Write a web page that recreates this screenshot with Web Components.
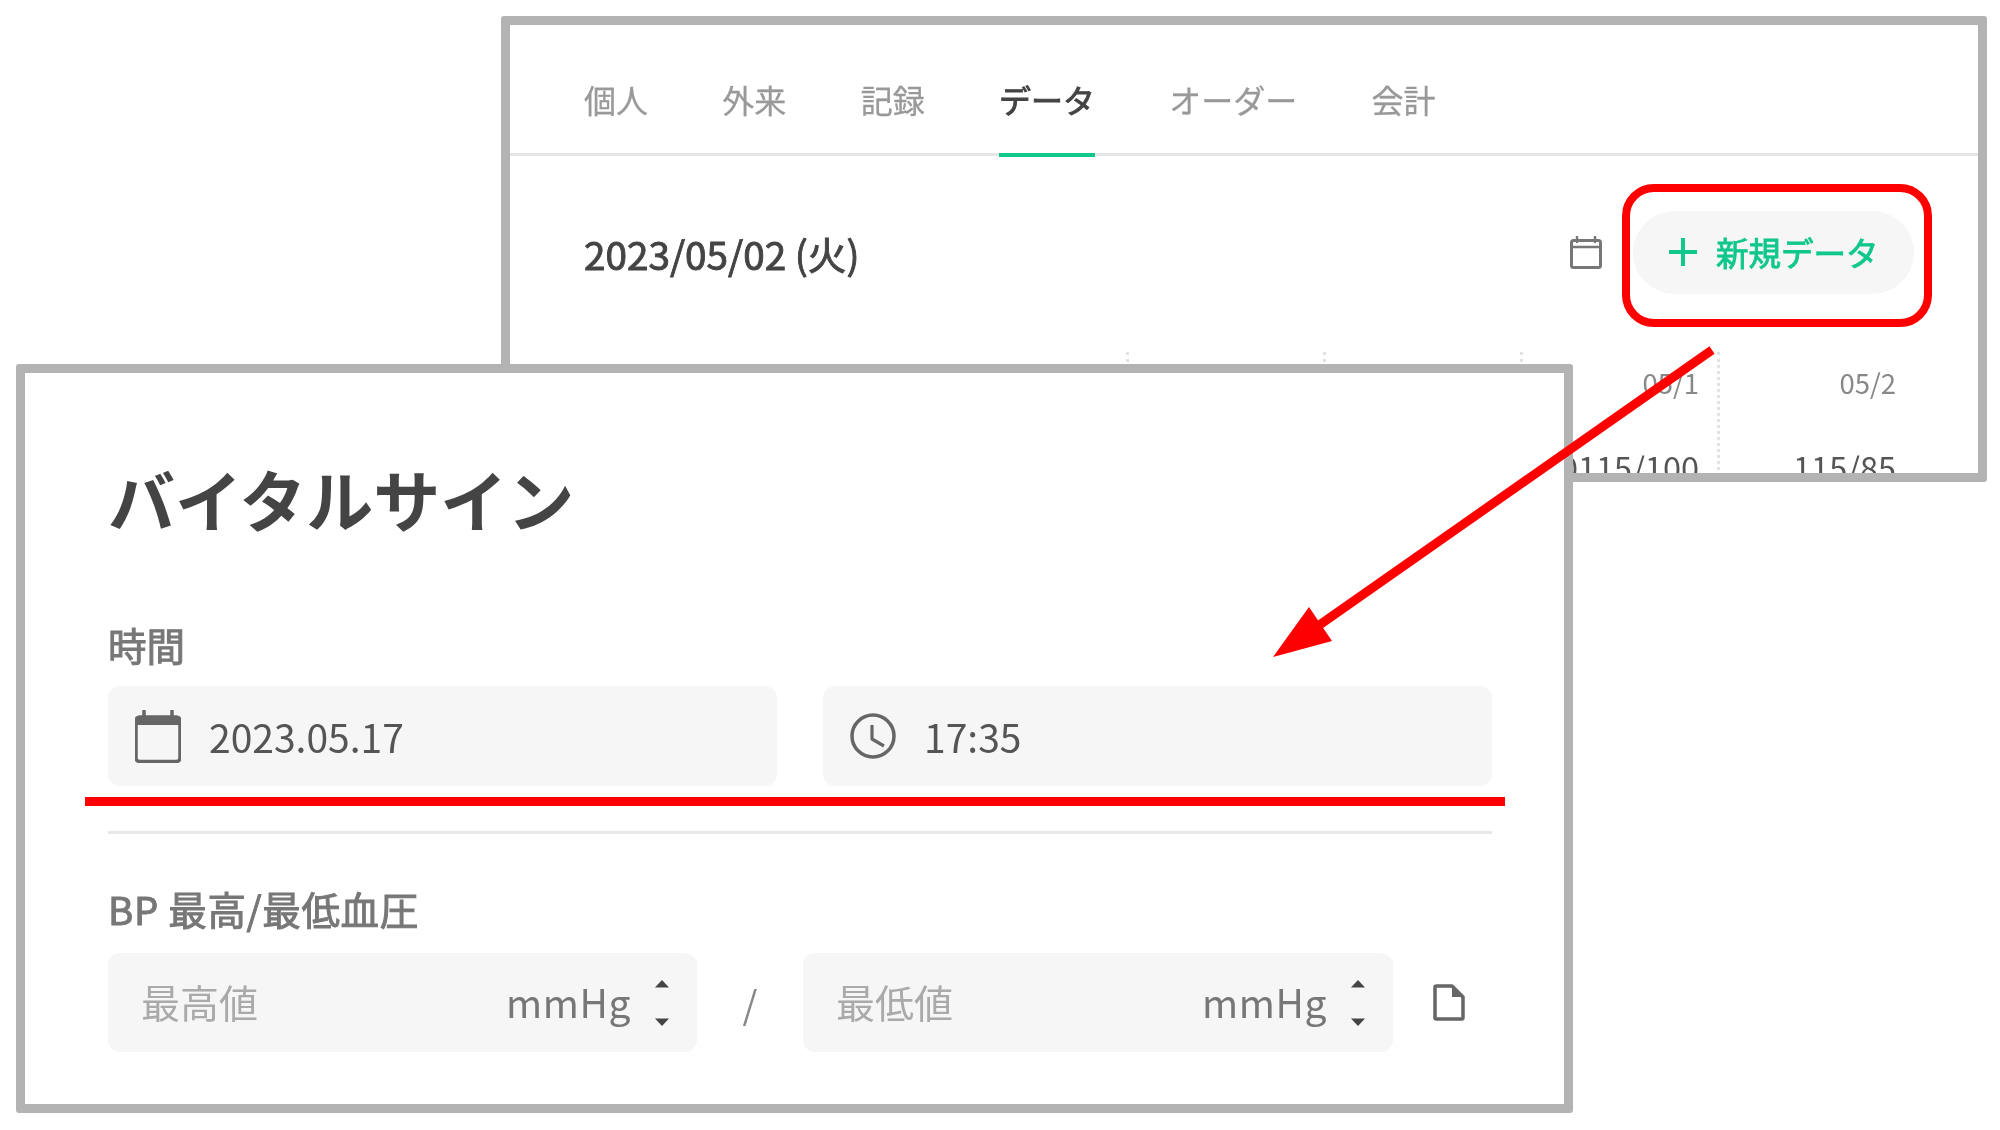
<!DOCTYPE html>
<html lang="ja">
<head>
<meta charset="utf-8">
<title>バイタルサイン</title>
<style>
    html, body { margin: 0; background: #fff; }
    body {
        font-family: "Noto Sans CJK JP", "Noto Sans", sans-serif;
        color: #444;
    }
    #canvas { position: relative; width: 2000px; height: 1130px; overflow: hidden; background: #fff; }
    #back { left: 501px; top: 16px; width: 1486px; height: 466px; }
    #front { left: 16px; top: 364px; width: 1557px; height: 749px; }
</style>
</head>
<body>
<div id="canvas">
    <app-window id="back">
        <tab-bar>
            <tab-item>個人</tab-item>
            <tab-item>外来</tab-item>
            <tab-item>記録</tab-item>
            <tab-item active>データ</tab-item>
            <tab-item>オーダー</tab-item>
            <tab-item>会計</tab-item>
        </tab-bar>
        <date-header date="2023/05/02 (火)">
            <new-button>新規データ</new-button>
        </date-header>
        <data-table></data-table>
    </app-window>

    <app-window id="front">
        <vital-form></vital-form>
    </app-window>

    <red-marks></red-marks>
</div>

<script>
const ICONS = {
    calendar: `<svg width="46" height="53" viewBox="0 0 46 53" fill="none">
        <rect x="1" y="7" width="44" height="44.5" rx="3.5" stroke="#666" stroke-width="3.5"/>
        <path d="M1 10.5a3.5 3.5 0 0 1 3.5-3.5h37a3.5 3.5 0 0 1 3.5 3.5V15H1z" fill="#666"/>
        <path d="M9 1v7M37 1v7" stroke="#666" stroke-width="3.5" stroke-linecap="round"/>
    </svg>`,
    calendarSmall: `<svg width="32" height="33" viewBox="0 0 32 33" fill="none">
        <rect x="1.5" y="4.5" width="29" height="27" rx="2" stroke="#777" stroke-width="3"/>
        <path d="M1.5 11h29" stroke="#777" stroke-width="2.5"/>
        <path d="M7 1v5M25 1v5" stroke="#777" stroke-width="2.5" stroke-linecap="round"/>
    </svg>`,
    clock: `<svg width="46" height="46" viewBox="0 0 46 46" fill="none">
        <circle cx="23" cy="23" r="21" stroke="#666" stroke-width="3.5"/>
        <path d="M22 12v14l12 7" stroke="#666" stroke-width="3.2" stroke-linejoin="round"/>
    </svg>`,
    doc: `<svg width="32" height="37" viewBox="0 0 32 37" fill="none">
        <path d="M2 3.5A1.5 1.5 0 0 1 3.500 2H19l11 11v20.500a1.500 1.500 0 0 1-1.500 1.500h-25A1.500 1.500 0 0 1 2 33.500z" stroke="#666" stroke-width="3.500" stroke-linejoin="round"/>
        <path d="M19 2l11 11H19z" fill="#666"/>
    </svg>`,
    plus: `<svg width="28" height="28" viewBox="0 0 28 28" fill="none">
        <path d="M0 14h28M14 0v28" stroke="#10c78c" stroke-width="4"/>
    </svg>`
};

class AppWindow extends HTMLElement {
    constructor() {
        super();
        this.attachShadow({mode: 'open'});
        this.shadowRoot.innerHTML = `
            <style>
                :host {
                    position: absolute;
                    display: block;
                    box-sizing: border-box;
                    border: 9px solid #b3b3b3;
                    border-radius: 3px;
                    background: #fff;
                    overflow: hidden;
                    filter: blur(.7px);
                }
            </style>
            <slot></slot>
        `;
    }
}

class TabBar extends HTMLElement {
    constructor() {
        super();
        this.attachShadow({mode: 'open'});
        this.shadowRoot.innerHTML = `
            <style>
                :host {
                    display: flex;
                    box-sizing: border-box;
                    height: 131px;
                    padding-left: 74px;
                    gap: 74.3px;
                    border-bottom: 3px solid #e6e6e6;
                }
            </style>
            <slot></slot>
        `;
    }
}

class TabItem extends HTMLElement {
    constructor() {
        super();
        this.attachShadow({mode: 'open'});
        this.shadowRoot.innerHTML = `
            <style>
                :host {
                    display: flex;
                    box-sizing: border-box;
                    height: 132px;
                    padding-top: 51px;
                    line-height: 46px;
                    font-size: 32px;
                    color: #999;
                    -webkit-text-stroke: .3px #999;
                }
                :host([active]) {
                    color: #444;
                    -webkit-text-stroke: .9px #444;
                    border-bottom: 4px solid #10c78c;
                }
            </style>
            <slot></slot>
        `;
    }
}

class DateHeader extends HTMLElement {
    constructor() {
        super();
        this.attachShadow({mode: 'open'});
        this.shadowRoot.innerHTML = `
            <style>
                :host {
                    display: flex;
                    align-items: center;
                    height: 83px;
                    margin-top: 55px;
                    padding: 0 64px 0 74px;
                }
                .date { flex: 1; font-size: 38.7px; color: #444; -webkit-text-stroke: .9px #444; }
                .cal { display: flex; margin-right: 31px; }
            </style>
            <span class="date">${this.getAttribute('date')}</span>
            <span class="cal">${ICONS.calendarSmall}</span>
            <slot></slot>
        `;
    }
}

class NewButton extends HTMLElement {
    constructor() {
        super();
        this.attachShadow({mode: 'open'});
        this.shadowRoot.innerHTML = `
            <style>
                :host {
                    display: flex;
                    align-items: center;
                    box-sizing: border-box;
                    width: 281px;
                    height: 83px;
                    padding: 0 0 2px 36px;
                    gap: 19px;
                    border-radius: 42px;
                    background: #f6f6f6;
                    color: #10c78c;
                    font-size: 32.5px;
                    -webkit-text-stroke: .9px #10c78c;
                }
                svg { display: block; }
            </style>
            ${ICONS.plus}
            <slot></slot>
        `;
    }
}

class DataTable extends HTMLElement {
    constructor() {
        super();
        this.attachShadow({mode: 'open'});
        const cols = [
            ['', ''],
            ['', ''],
            ['', ''],
            ['05/1', '0115/100'],
            ['05/2', '115/85']
        ];
        this.shadowRoot.innerHTML = `
            <style>
                :host {
                    display: grid;
                    grid-template-columns: repeat(5, 197px);
                    justify-content: end;
                    margin-top: 58px;
                    padding-right: 61px;
                    color: #555;
                }
                .col {
                    box-sizing: border-box;
                    height: 130px;
                    padding-right: 18px;
                    text-align: right;
                    border-right: 3px dotted #e2e2e2;
                    white-space: nowrap;
                }
                .col:last-child { border-right: 0; padding-right: 21px; }
                .head { height: 93px; padding-top: 10px; box-sizing: border-box; font-size: 27.5px; line-height: 40px; color: #888; }
                .val { font-size: 32.5px; line-height: 44px; }
            </style>
            ${cols.map(c => `<div class="col"><div class="head">${c[0]}</div><div class="val">${c[1]}</div></div>`).join('')}
        `;
    }
}

class FormLabel extends HTMLElement {
    constructor() {
        super();
        this.attachShadow({mode: 'open'});
        this.shadowRoot.innerHTML = `
            <style>
                :host {
                    display: block;
                    font-size: 38.5px;
                    line-height: 36px;
                    color: #777;
                    -webkit-text-stroke: 1px #777;
                    white-space: nowrap;
                }
                :host([wide]) { letter-spacing: .65px; }
            </style>
            <slot></slot>
        `;
    }
}

class IconField extends HTMLElement {
    constructor() {
        super();
        this.attachShadow({mode: 'open'});
        this.shadowRoot.innerHTML = `
            <style>
                :host {
                    display: flex;
                    align-items: center;
                    box-sizing: border-box;
                    height: 100px;
                    padding-left: 27px;
                    gap: 28px;
                    border-radius: 12px;
                    background: #f6f6f6;
                    font-size: 39px;
                    color: #555;
                }
                .ic { display: flex; }
            </style>
            <span class="ic">${ICONS[this.getAttribute('icon')]}</span>
            <slot></slot>
        `;
    }
}

class UnitField extends HTMLElement {
    constructor() {
        super();
        this.attachShadow({mode: 'open'});
        this.shadowRoot.innerHTML = `
            <style>
                :host {
                    display: flex;
                    align-items: center;
                    box-sizing: border-box;
                    height: 99px;
                    padding: 0 27px 0 33px;
                    border-radius: 12px;
                    background: #f6f6f6;
                    font-size: 39px;
                }
                .txt { flex: 1; padding-bottom: 3px; color: #aaa; }
                .unit { padding-bottom: 3px; color: #777; margin-right: 23px; letter-spacing: .6px; }
                svg { display: block; }
            </style>
            <span class="txt"><slot></slot></span>
            <span class="unit">mmHg</span>
            <svg width="16" height="46" viewBox="0 0 16 46" fill="#444">
                <path d="M8 0l7 7.500H1z"/>
                <path d="M1 38.500h14l-7 7.500z"/>
            </svg>
        `;
    }
}

class VitalForm extends HTMLElement {
    constructor() {
        super();
        this.attachShadow({mode: 'open'});
        this.shadowRoot.innerHTML = `
            <style>
                :host {
                    display: block;
                    padding: 91px 72px 0 83px;
                }
                h1 {
                    margin: 0 0 95px;
                    font-size: 67px;
                    line-height: 67px;
                    font-weight: 700;
                    color: #444;
                }
                .times {
                    display: grid;
                    grid-template-columns: 1fr 1fr;
                    gap: 46px;
                    margin-top: 24px;
                }
                hr {
                    height: 3px;
                    margin: 45px 0 56px;
                    border: 0;
                    background: #e8e8e8;
                }
                .bp {
                    display: grid;
                    grid-template-columns: 589px 106px 590px 100px;
                    align-items: center;
                    margin-top: 27px;
                }
                .slash { text-align: center; font-size: 38px; color: #888; }
                .doc { display: flex; padding-left: 40px; }
            </style>
            <h1>バイタルサイン</h1>
            <form-label>時間</form-label>
            <div class="times">
                <icon-field icon="calendar">2023.05.17</icon-field>
                <icon-field icon="clock">17:35</icon-field>
            </div>
            <hr>
            <form-label wide>BP 最高/最低血圧</form-label>
            <div class="bp">
                <unit-field>最高値</unit-field>
                <span class="slash">/</span>
                <unit-field>最低値</unit-field>
                <span class="doc">${ICONS.doc}</span>
            </div>
        `;
    }
}

// the red notes drawn over the screenshots
class RedMarks extends HTMLElement {
    constructor() {
        super();
        this.attachShadow({mode: 'open'});
        this.shadowRoot.innerHTML = `
            <style>
                :host { position: absolute; left: 0; top: 0; display: block; }
                svg { display: block; position: absolute; left: 0; top: 0; }
            </style>
            <svg width="2000" height="1130" viewBox="0 0 2000 1130">
                <rect x="1626" y="188" width="302" height="135" rx="28" fill="none" stroke="#f00" stroke-width="8"/>
                <path d="M1712 350L1318 626" stroke="#f00" stroke-width="9"/>
                <path d="M1273 657L1309 607L1332 641z" fill="#f00"/>
                <rect x="85" y="797" width="1420" height="9" fill="#f00"/>
            </svg>
        `;
    }
}

customElements.define('app-window', AppWindow);
customElements.define('tab-bar', TabBar);
customElements.define('tab-item', TabItem);
customElements.define('date-header', DateHeader);
customElements.define('new-button', NewButton);
customElements.define('data-table', DataTable);
customElements.define('form-label', FormLabel);
customElements.define('icon-field', IconField);
customElements.define('unit-field', UnitField);
customElements.define('vital-form', VitalForm);
customElements.define('red-marks', RedMarks);
</script>
</body>
</html>
